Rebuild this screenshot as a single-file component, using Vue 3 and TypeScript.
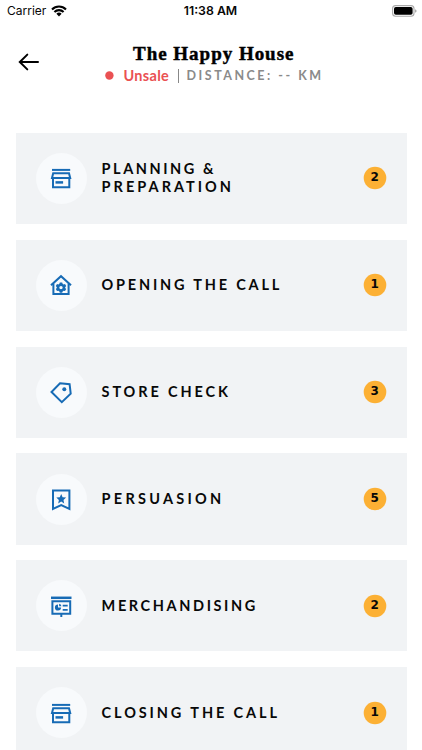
<script setup lang="ts">
type IconName = 'store' | 'house' | 'tag' | 'bookmark' | 'board'

interface Step {
  lines: { text: string; spacing: number }[]
  count: number
  icon: IconName
}

const steps: Step[] = [
  {
    lines: [
      { text: 'PLANNING &', spacing: 2.55 },
      { text: 'PREPARATION', spacing: 3.02 },
    ],
    count: 2,
    icon: 'store',
  },
  { lines: [{ text: 'OPENING THE CALL', spacing: 2.8 }], count: 1, icon: 'house' },
  { lines: [{ text: 'STORE CHECK', spacing: 2.87 }], count: 3, icon: 'tag' },
  { lines: [{ text: 'PERSUASION', spacing: 3.25 }], count: 5, icon: 'bookmark' },
  { lines: [{ text: 'MERCHANDISING', spacing: 2.6 }], count: 2, icon: 'board' },
  { lines: [{ text: 'CLOSING THE CALL', spacing: 2.9 }], count: 1, icon: 'store' },
]
</script>

<template>
  <div class="screen">
    <div class="status">
      <div class="carrier">
        <span>Carrier</span>
        <svg class="wifi" viewBox="0 0 16 12" width="16" height="12">
          <path d="M1 4.4a10 10 0 0 1 14 0" />
          <path d="M3.4 7a6.5 6.5 0 0 1 9.2 0" />
          <path class="solid" d="M8 11.4 5.4 8.8a3.7 3.7 0 0 1 5.2 0z" />
        </svg>
      </div>
      <span class="time">11:38 AM</span>
      <div class="power">
        <svg viewBox="0 0 25 12" width="25" height="12">
          <rect x="0.6" y="0.6" width="21.4" height="10.6" rx="3" fill="#fff" stroke="#aaa" stroke-width="1.1" />
          <rect x="2" y="2" width="18.6" height="7.8" rx="1.8" fill="#000" />
          <path d="M23.2 4.2v3.5q1.3-.6 1.3-1.8t-1.3-1.7z" fill="#999" />
        </svg>
      </div>
    </div>

    <header class="header">
      <button class="back" aria-label="Back">
        <svg viewBox="0 0 22 18" width="22" height="18">
          <path d="M20 9H2M9.3 1.6 1.8 9l7.5 7.4" />
        </svg>
      </button>
      <div class="heading">
        <h1>The Happy House</h1>
        <div class="meta">
          <svg class="dot" viewBox="0 0 9 9"><circle cx="4.4" cy="4.5" r="4.2" /></svg>
          <span class="unsale">Unsale</span>
          <i class="bar"></i>
          <span class="distance">DISTANCE: -- KM</span>
        </div>
      </div>
    </header>

    <main class="list">
      <section v-for="(step, i) in steps" :key="i" class="card">
        <div class="bubble">
          <svg v-if="step.icon === 'store'" class="icon" viewBox="0 0 24 24">
            <path d="M3 3.9h18.2" />
            <path d="M4.2 7.3h15.8l1.2 4.8H3z" />
            <path d="M4 12.2v9h16.3v-9" />
            <path class="thick" d="M6.5 16.4h7.6" />
          </svg>
          <svg v-else-if="step.icon === 'house'" class="icon" viewBox="0 0 24 24">
            <path d="M2 12.3 12 3.2l10 9.1" />
            <path d="M4.4 10.6v10.5h15.2V10.6" />
            <path
              class="solid"
              fill-rule="evenodd"
              d="M10.8 9.5h2.4l.4 1.3 1 .6 1.4-.3 1.2 2-1 1.1v.8l1 1.1-1.2 2-1.4-.3-1 .6-.4 1.3h-2.4l-.4-1.3-1-.6-1.4.3-1.2-2 1-1.1v-.8l-1-1.1 1.2-2 1.4.3 1-.6zM12 12.9a1.7 1.7 0 1 0 0 3.4 1.7 1.7 0 0 0 0-3.4z"
            />
          </svg>
          <svg v-else-if="step.icon === 'tag'" class="icon" viewBox="0 0 24 24">
            <path d="M11 3.3 20.6 4.2 21.7 13.6 12.8 22.1 2.5 12z" />
            <circle class="solid" cx="15.3" cy="9.2" r="2" />
          </svg>
          <svg v-else-if="step.icon === 'bookmark'" class="icon" viewBox="0 0 24 24">
            <path d="M4 3.5h16.4v18.4L12.2 18 4 21.9z" />
            <path class="solid" d="M12.2 7l1.4 3.2 3.5.4-2.6 2.3.7 3.5-3-1.8-3 1.8.7-3.5-2.6-2.3 3.5-.4z" />
          </svg>
          <svg v-else class="icon" viewBox="0 0 24 24">
            <path class="thick" d="M2 3.8h20.5" />
            <path d="M3.4 7.2h17.8v12.5H3.4z" />
            <path d="M12.3 20v3" />
            <path class="solid" d="M9 10.4v3.2h3.1A3.1 3.1 0 1 1 9 10.4z" />
            <path class="solid" d="M10.1 9.8a2.7 2.7 0 0 1 2.3 2.4h-2.3z" />
            <path class="thin" d="M13.7 11.7h5M13.7 15.8h5" />
          </svg>
        </div>
        <div class="title">
          <div v-for="line in step.lines" :key="line.text" :style="{ letterSpacing: line.spacing + 'px' }">
            {{ line.text }}
          </div>
        </div>
        <span class="badge">
          <svg viewBox="0 0 24 24"><circle cx="12" cy="12" r="11.3" /></svg>
          <b>{{ step.count }}</b>
        </span>
      </section>
    </main>
  </div>
</template>

<style>
body {
  background: #fff;
  overflow: hidden;
}
</style>

<style scoped>
.screen {
  width: 422px;
  height: 750px;
  overflow: hidden;
  background: #fff;
  color: #080808;
  font-family: Lato, 'Liberation Sans', sans-serif;
}
.status {
  display: grid;
  grid-template-columns: 1fr auto 1fr;
  align-items: center;
  height: 22px;
  padding: 0 5px 0 7px;
  font: 12px/22px Inter, sans-serif;
}
.carrier {
  display: flex;
  align-items: center;
  gap: 5px;
}
.wifi {
  fill: none;
  stroke: #000;
  stroke-width: 2.1;
}
.wifi .solid {
  fill: #000;
  stroke: none;
}
.time {
  margin-right: 3px;
  font-weight: 600;
  font-size: 12.3px;
}
.power {
  display: flex;
  justify-content: flex-end;
}
.header {
  display: flex;
  height: 110.8px;
}
.back {
  display: flex;
  width: 22px;
  height: 18px;
  margin: 31px 0 0 18px;
  padding: 0;
  border: 0;
  background: none;
}
.back path {
  fill: none;
  stroke: #000;
  stroke-width: 2;
  stroke-linecap: round;
}
.heading {
  margin-left: 65px;
  padding-top: 20px;
}
h1 {
  margin: 0 0 0 28px;
  font: 700 19px/24px 'Liberation Serif', serif;
  letter-spacing: 0.98px;
  color: #000;
  -webkit-text-stroke: 0.45px #000;
  white-space: nowrap;
}
.meta {
  display: flex;
  align-items: center;
  height: 18px;
  white-space: nowrap;
}
.dot {
  width: 9px;
  height: 9px;
  fill: #ea5153;
}
.unsale {
  margin-left: 9.5px;
  font-size: 14.5px;
  font-weight: 700;
  letter-spacing: 0.3px;
  color: #ea5153;
}
.bar {
  width: 1px;
  height: 14px;
  margin: 1px 8px 0 8.5px;
  background: #888;
}
.distance {
  font-size: 12.5px;
  font-weight: 700;
  letter-spacing: 2.5px;
  color: #8a8a8a;
}
.list {
  display: flex;
  flex-direction: column;
  gap: 15.7px;
  padding: 0 15.5px 0 15.7px;
}
.card {
  display: flex;
  flex: none;
  align-items: center;
  height: 91.2px;
  box-sizing: border-box;
  padding: 0 19.8px 0 20.3px;
  background: #f1f3f5;
}
.bubble {
  display: flex;
  align-items: center;
  justify-content: center;
  width: 51px;
  height: 51px;
  border-radius: 50%;
  background: #f8fafc;
}
.icon {
  width: 24px;
  height: 24px;
  margin-right: 1px;
  fill: none;
  stroke: #176bb5;
  stroke-width: 2;
}
.icon .solid {
  fill: #176bb5;
  stroke: none;
}
.icon .thick {
  stroke-width: 2.5;
}
.icon .thin {
  stroke-width: 1.8;
}
.title {
  flex: 1;
  margin-left: 14.6px;
  font-size: 14.5px;
  font-weight: 700;
  line-height: 18px;
  white-space: nowrap;
}
.badge {
  display: grid;
  width: 24px;
  height: 24px;
}
.badge > * {
  grid-area: 1 / 1;
}
.badge svg {
  width: 24px;
  height: 24px;
  fill: #fcb034;
}
.badge b {
  z-index: 1;
  font: 700 12px/22.5px 'DejaVu Sans', sans-serif;
  text-align: center;
}
</style>
